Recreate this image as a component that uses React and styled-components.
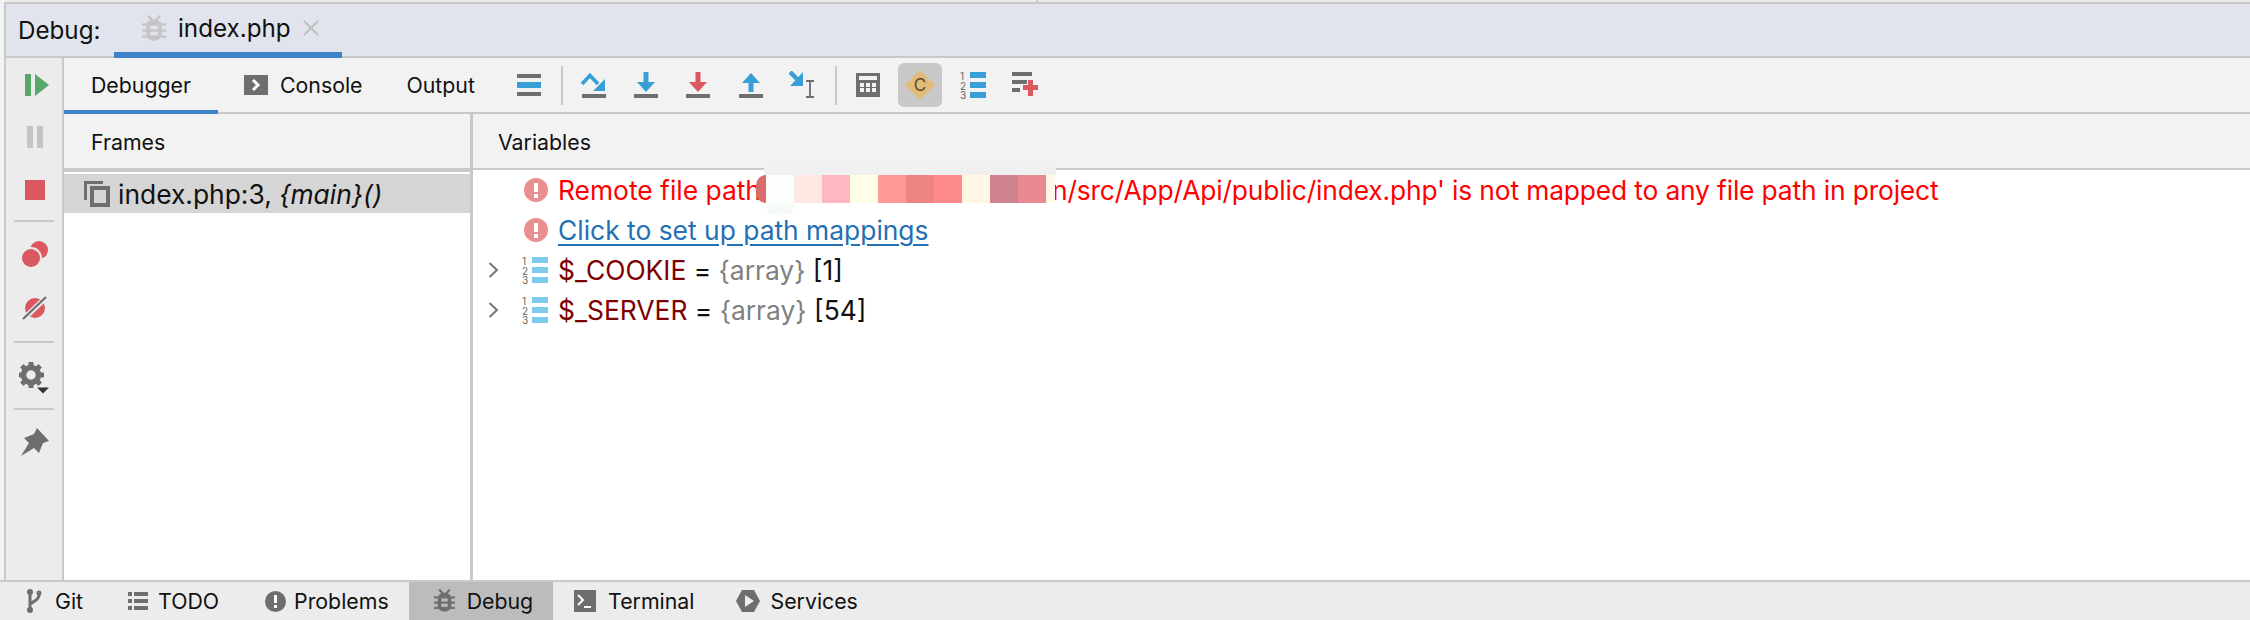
import React from "react";
import styled, { createGlobalStyle } from "styled-components";

const Global = createGlobalStyle`
  html, body { margin: 0; padding: 0; background: #f2f2f2; }
  body { font-family: Inter, "Liberation Sans", sans-serif; color: #111; }
  * { box-sizing: border-box; }
`;

const BLUE = "#389fd6", GRAY = "#6e6e6e", RED = "#db5860", GREEN = "#59a869", LINE = "#c9c9c9";

const Page = styled.div`
  width: 2250px; height: 620px; display: flex; flex-direction: column; overflow: hidden;
  font-size: 21.3px; background: #f2f2f2;
`;
const TopStrip = styled.div`height: 2px; flex: none; background: #ececec; display: flex; margin-left: 6px;`;
const TopStripCell = styled.div`width: 1032px; border-right: 2px solid ${LINE};`;
const Shell = styled.div`
  flex: 1; min-height: 0; margin-left: 4px; border-left: 2px solid ${LINE};
  border-top: 2px solid ${LINE}; display: flex; flex-direction: column;
`;
const DebugHeader = styled.div`
  height: 54px; flex: none; background: #e1e4ec; border-bottom: 2px solid ${LINE};
  display: flex; align-items: stretch; padding-left: 12px; font-size: 24.2px;
`;
const HeaderLabel = styled.div`display: flex; align-items: center; width: 96px;`;
const HeaderTab = styled.div`
  width: 228px; height: 54px; border-bottom: 6px solid #4083c9; display: flex; align-items: center;
  padding-left: 28px; gap: 12px;
`;
const Main = styled.div`flex: 1; min-height: 0; display: flex;`;
const Rail = styled.div`
  width: 58px; flex: none; background: #ececec; border-right: 2px solid ${LINE};
  display: flex; flex-direction: column; align-items: center; padding-top: 14px;
`;
const RailSlot = styled.div`
  width: 44px; height: ${p => p.$h || 44}px; margin-top: ${p => p.$mt || 0}px; margin-left: ${p => p.$ml || 2}px;
  display: flex; align-items: center; justify-content: center; flex: none;
`;
const RailSep = styled.div`width: 40px; height: 2px; flex: none; background: ${LINE}; margin: ${p => p.$m || "0"};`;
const Content = styled.div`flex: 1; min-width: 0; display: flex; flex-direction: column; background: #fff;`;
const Toolbar = styled.div`
  height: 56px; flex: none; background: #f2f2f2; border-bottom: 2px solid ${LINE}; display: flex; align-items: stretch;
`;
const Tab = styled.div`
  display: flex; align-items: center; gap: 12px; height: 56px; padding: 2px ${p => p.$pr}px 0 ${p => p.$pl}px;
  border-bottom: 4px solid ${p => (p.$active ? "#4083c9" : "transparent")};
`;
const IconGroup = styled.div`display: flex; align-items: center; gap: 8.5px; height: 54px;`;
const ToolSep = styled.div`width: 2px; height: 39px; background: ${LINE}; margin-left: 1.5px; flex: none;`;
const ToolButton = styled.div`
  width: 44px; height: 44px; flex: none; display: flex; align-items: center; justify-content: center;
  border-radius: 6px; background: ${p => (p.$on ? "#c8c8c8" : "transparent")};
`;
const Panels = styled.div`flex: 1; min-height: 0; display: flex;`;
const FramesPanel = styled.div`width: 409px; flex: none; border-right: 3px solid ${LINE}; display: flex; flex-direction: column;`;
const FramesHeader = styled.div`
  height: 58px; flex: none; background: #f2f2f2; border-bottom: 4px solid ${LINE}; display: flex; align-items: center; padding: 2px 0 0 27px;
`;
const FrameRow = styled.div`
  height: 39px; margin-top: 2px; background: #d5d5d5; display: flex; align-items: center; padding-left: 20px; gap: 8px; flex: none;
  font-size: 26.4px;
`;
const Italic = styled.em`font-style: italic;`;
const VarsPanel = styled.div`flex: 1; min-width: 0; display: flex; flex-direction: column;`;
const VarsHeader = styled.div`
  height: 56px; flex: none; background: #f2f2f2; border-bottom: 2px solid ${LINE}; display: flex; align-items: center; padding: 2px 0 0 25px;
`;
const VarRow = styled.div`height: 40px; flex: none; display: flex; align-items: center; white-space: pre; font-size: 26.4px;`;
const ChevronBox = styled.div`width: 12px; margin-left: 15px; flex: none; display: flex;`;
const RowIcon = styled.div`
  width: 27px; margin-left: ${p => p.$ml || 21}px; margin-right: 10px; flex: none; display: flex; justify-content: flex-end;
`;
const ErrorText = styled.span`color: #ff0000;`;
const ErrorTail = styled(ErrorText)`letter-spacing: -0.16px;`;
const LinkText = styled.span`color: #2470b3; text-decoration: underline; text-underline-offset: 4px;`;
const VarName = styled.span`color: #7f0000;`;
const VarType = styled.span`color: #808080;`;
const Redaction = styled.span`display: inline-block; position: relative; height: 28px; width: ${p => p.$w}px; flex: none;`;
const RedactionVeil = styled.span`
  position: absolute; left: 3px; top: -11px; width: 292px; height: 12px; background: #f0f0f0;
`;
const RedactionBlob = styled.span`
  position: absolute; left: -5px; top: -1px; width: 12px; height: 28px; background: #d96d6b; border-radius: 10px 0 0 10px;
`;
const RedactionTail = styled.span`
  position: absolute; left: 5px; top: 27px; width: 28px; height: 12px; background: #f7fbf8; border-radius: 0 0 8px 8px;
`;
const Pixels = styled.span`position: absolute; left: 5px; top: -1px; display: flex; height: 28px;`;
const Pixel = styled.span`display: block; width: ${p => p.$w || 28}px; height: 28px; background: ${p => p.$c};`;
const BottomBar = styled.div`
  height: 40px; flex: none; background: #ececec; border-top: 2px solid ${LINE}; display: flex; align-items: stretch;
`;
const BottomItem = styled.div`
  display: flex; align-items: center; gap: ${p => p.$gap}px; padding: 0 20px 0 ${p => p.$pl}px;
  background: ${p => (p.$on ? "#bcbcbc" : "transparent")};
`;

const Bug = ({ c, s = 24, bg }) => (
  <svg width={s} height={s * 1.1} viewBox="0 0 20 22">
    <path d="M5 .5l3.500 4M15 .5l-3.500 4" stroke={c} strokeWidth="2" fill="none" />
    <rect x="3.500" y="3.500" width="13" height="18" rx="6" fill={c} />
    <rect x="0" y="7" width="20" height="2" fill={c} />
    <rect x="0" y="12" width="20" height="2" fill={c} />
    <rect x="0" y="17" width="20" height="2" fill={c} />
    <rect x="7" y="9" width="6" height="3" fill={bg} />
    <rect x="7" y="14" width="6" height="3" fill={bg} />
  </svg>
);
const CloseX = () => (
  <svg width="16" height="16" viewBox="0 0 16 16" stroke="#c0c0c0" strokeWidth="1.800"><path d="M1 1l14 14M15 1L1 15" /></svg>
);
const Resume = () => (
  <svg width="24" height="22" viewBox="0 0 24 22"><rect width="6" height="22" fill={GREEN} /><path d="M10 0l14 11-14 11z" fill={GREEN} /></svg>
);
const Pause = () => (
  <svg width="16" height="22" viewBox="0 0 16 22" fill="#c4c4c4"><rect width="6" height="22" /><rect x="10" width="6" height="22" /></svg>
);
const Stop = () => <svg width="20" height="20"><rect width="20" height="20" fill={RED} /></svg>;
const Breakpoints = () => (
  <svg width="26" height="26" viewBox="0 0 26 26">
    <circle cx="17" cy="9" r="9" fill={RED} />
    <circle cx="9" cy="17" r="11" fill="#ececec" />
    <circle cx="9" cy="17" r="9" fill={RED} />
  </svg>
);
const Mute = () => (
  <svg width="26" height="24" viewBox="0 0 26 24">
    <circle cx="13" cy="12" r="10" fill={RED} />
    <path d="M0 24.500L24.500 1" stroke="#ececec" strokeWidth="5.500" />
    <path d="M1 23L24 1" stroke={GRAY} strokeWidth="2.200" />
  </svg>
);
const Gear = () => (
  <svg width="32" height="32" viewBox="0 0 32 32">
    <g fill={GRAY}>
      {[0, 45, 90, 135, 180, 225, 270, 315].map(a => (
        <rect key={a} x="9.500" y="0" width="5" height="6" transform={`rotate(${a} 12 13)`} />
      ))}
    </g>
    <circle cx="12" cy="13" r="7.500" fill="none" stroke={GRAY} strokeWidth="5.500" />
    <path d="M18 25.500h12l-6 6z" fill="#333" />
  </svg>
);
const Pin = () => (
  <svg width="28" height="28" viewBox="0 0 28 28" fill={GRAY}>
    <path d="M16 0l12 13-6 2-4 10-5-5L0 28l8-13-5-5 10-4z" />
  </svg>
);
const ConsoleIcon = () => (
  <svg width="24" height="20" viewBox="0 0 24 20"><rect width="24" height="20" fill={GRAY} /><path d="M9 5l5 5-5 5" fill="none" stroke="#fff" strokeWidth="3" /></svg>
);
const Threads = () => (
  <svg width="24" height="22" viewBox="0 0 24 22">
    <rect width="24" height="4" fill={GRAY} /><rect y="8" width="24" height="6" fill={BLUE} /><rect y="18" width="24" height="4" fill={GRAY} />
  </svg>
);
const StepOver = () => (
  <svg width="26" height="26" viewBox="0 0 26 26">
    <path d="M2 12L10 3.500 18 12" fill="none" stroke={BLUE} strokeWidth="3.600" />
    <path d="M25 7v12H13z" fill={BLUE} />
    <rect x="2" y="22" width="24" height="4" fill={GRAY} />
  </svg>
);
const StepInto = ({ c = BLUE }) => (
  <svg width="24" height="26" viewBox="0 0 24 26">
    <rect x="9.500" width="5" height="12" fill={c} /><path d="M3 10h18l-9 10z" fill={c} />
    <rect y="22" width="24" height="4" fill={GRAY} />
  </svg>
);
const StepOut = () => (
  <svg width="24" height="26" viewBox="0 0 24 26">
    <path d="M12 1l9 10H3z" fill={BLUE} /><rect x="9.500" y="10" width="5" height="10" fill={BLUE} />
    <rect y="22" width="24" height="4" fill={GRAY} />
  </svg>
);
const RunToCursor = () => (
  <svg width="28" height="28" viewBox="0 0 28 28">
    <path d="M1 1l9 9" stroke={BLUE} strokeWidth="4.500" fill="none" />
    <path d="M14 1v14H1z" fill={BLUE} />
    <path d="M17 10h8M17 26h8M21 10v16" stroke={GRAY} strokeWidth="1.800" fill="none" />
  </svg>
);
const Calc = () => (
  <svg width="24" height="24" viewBox="0 0 24 24">
    <rect width="24" height="24" fill={GRAY} />
    <rect x="3" y="3" width="18" height="4" fill="#f2f2f2" />
    {[10, 15].map(y => [4, 10, 16].map(x => <rect key={x + "-" + y} x={x} y={y} width="4" height="4" fill="#f2f2f2" />))}
  </svg>
);
const CBadge = () => (
  <svg width="30" height="30" viewBox="0 0 30 30">
    <path d="M15 0l15 15-15 15L0 15z" fill="#e3bb78" />
    <text x="15" y="21" textAnchor="middle" fontSize="17" fontFamily="Inter, sans-serif" fill="#5a4a30">C</text>
  </svg>
);
const NumList = ({ c = BLUE, dg = "#666" }) => (
  <svg width="26" height="34" viewBox="0 0 26 34">
    <g fill={dg} fontSize="10" fontFamily="Inter, sans-serif">
      <text x="0" y="12">1</text><text x="0" y="21.500">2</text><text x="0" y="31">3</text>
    </g>
    <rect x="10" y="4" width="16" height="6" fill={c} /><rect x="10" y="14" width="16" height="6" fill={c} /><rect x="10" y="24" width="16" height="6" fill={c} />
  </svg>
);
const AddList = () => (
  <svg width="26" height="26" viewBox="0 0 26 26">
    <rect y="0" width="20" height="4" fill={GRAY} /><rect y="8" width="15" height="4" fill={GRAY} /><rect y="16" width="8" height="4" fill={GRAY} />
    <rect x="11" y="13" width="15" height="5" fill={RED} /><rect x="16" y="8" width="5" height="16" fill={RED} />
  </svg>
);
const FrameIcon = () => (
  <svg width="26" height="26" viewBox="0 0 26 26" fill="none" stroke={GRAY}>
    <path d="M1.500 19V1.500H19" strokeWidth="3" />
    <rect x="8" y="7" width="16" height="17" strokeWidth="4" />
  </svg>
);
const ErrorIcon = () => (
  <svg width="24" height="24" viewBox="0 0 24 24">
    <circle cx="12" cy="12" r="12" fill="#e98f8f" />
    <rect x="10" y="5" width="4" height="9" fill="#fff" /><rect x="10" y="16" width="4" height="4" fill="#fff" />
  </svg>
);
const Chevron = () => (
  <svg width="11" height="16" viewBox="0 0 11 16" fill="none" stroke="#777" strokeWidth="2"><path d="M1.500 1l7.500 7-7.500 7" /></svg>
);
const GitIcon = () => (
  <svg width="18" height="24" viewBox="0 0 18 24" fill="none" stroke={GRAY} strokeWidth="3">
    <path d="M5 3v18M14 4v2c0 5-5 6-9 9" /><circle cx="5" cy="3" r="1.500" /><circle cx="14" cy="4" r="1" /><circle cx="5" cy="21" r="1.500" />
  </svg>
);
const TodoIcon = () => (
  <svg width="20" height="18" viewBox="0 0 20 18" fill={GRAY}>
    {[0, 7, 14].map(y => <g key={y}><rect y={y} width="4" height="4" /><rect x="6" y={y} width="14" height="4" /></g>)}
  </svg>
);
const ProblemIcon = () => (
  <svg width="21" height="21" viewBox="0 0 21 21">
    <circle cx="10.500" cy="10.500" r="10.500" fill={GRAY} /><rect x="9" y="4" width="3" height="8" fill="#fff" /><rect x="9" y="14" width="3" height="3" fill="#fff" />
  </svg>
);
const TerminalIcon = () => (
  <svg width="22" height="22" viewBox="0 0 22 22">
    <rect width="22" height="22" fill={GRAY} /><path d="M4 5l5 5-5 5" fill="none" stroke="#fff" strokeWidth="2" /><rect x="10" y="16" width="7" height="2" fill="#fff" />
  </svg>
);
const ServicesIcon = () => (
  <svg width="24" height="24" viewBox="0 0 24 24">
    <path d="M6 1h12l6 11-6 11H6L0 12z" fill={GRAY} /><path d="M9 6l9 6-9 6z" fill="#ececec" />
  </svg>
);

const pixels = ["#fbfefa", "#fde8e3", "#ffb8c0", "#ffffe8", "#ff9a94", "#ef8583", "#ff8a8e", "#fff6e6", "#cf8391", "#e88a90"];

const VarLine = ({ name, size }) => (
  <VarRow>
    <ChevronBox><Chevron /></ChevronBox>
    <RowIcon><NumList c="#7dcced" /></RowIcon>
    <VarName>{name}</VarName>
    <span> = </span>
    <VarType>{"{array}"}</VarType>
    <span> [{size}]</span>
  </VarRow>
);

export default function App() {
  return (
    <Page>
      <Global />
      <TopStrip><TopStripCell /></TopStrip>
      <Shell>
        <DebugHeader>
          <HeaderLabel>Debug:</HeaderLabel>
          <HeaderTab><Bug c="#c6c6c6" bg="#e1e4ec" /><span>index.php</span><CloseX /></HeaderTab>
        </DebugHeader>
        <Main>
          <Rail>
            <RailSlot $h="26" $ml="5"><Resume /></RailSlot>
            <RailSlot $h="26" $mt="26"><Pause /></RailSlot>
            <RailSlot $h="24" $mt="28"><Stop /></RailSlot>
            <RailSep $m="18px 0 18px" />
            <RailSlot $h="28"><Breakpoints /></RailSlot>
            <RailSlot $h="28" $mt="26"><Mute /></RailSlot>
            <RailSep $m="19px 0 18px" />
            <RailSlot $h="34"><Gear /></RailSlot>
            <RailSep $m="13px 0 17px" />
            <RailSlot $h="30"><Pin /></RailSlot>
          </Rail>
          <Content>
            <Toolbar>
              <Tab $active $pl={27} $pr={27}>Debugger</Tab>
              <Tab $pl={26} $pr={22}><ConsoleIcon />Console</Tab>
              <Tab $pl={22} $pr={32}>Output</Tab>
              <IconGroup>
                <ToolButton><Threads /></ToolButton>
                <ToolSep />
                <ToolButton><StepOver /></ToolButton>
                <ToolButton><StepInto /></ToolButton>
                <ToolButton><StepInto c={RED} /></ToolButton>
                <ToolButton><StepOut /></ToolButton>
                <ToolButton><RunToCursor /></ToolButton>
                <ToolSep />
                <ToolButton><Calc /></ToolButton>
                <ToolButton $on><CBadge /></ToolButton>
                <ToolButton><NumList /></ToolButton>
                <ToolButton><AddList /></ToolButton>
              </IconGroup>
            </Toolbar>
            <Panels>
              <FramesPanel>
                <FramesHeader>Frames</FramesHeader>
                <FrameRow><FrameIcon /><span>index.php:3, <Italic>{"{main}()"}</Italic></span></FrameRow>
              </FramesPanel>
              <VarsPanel>
                <VarsHeader>Variables</VarsHeader>
                <VarRow>
                  <RowIcon $ml={48}><ErrorIcon /></RowIcon>
                  <ErrorText>Remote file path</ErrorText>
                  <Redaction $w={291}>
                    <RedactionVeil />
                    <RedactionBlob />
                    <RedactionTail />
                    <Pixels>
                      {pixels.map(c => <Pixel key={c} $c={c} />)}
                      <Pixel $c="#fff8e8" $w={9} />
                    </Pixels>
                  </Redaction>
                  <ErrorTail>n/src/App/Api/public/index.php' is not mapped to any file path in project</ErrorTail>
                </VarRow>
                <VarRow>
                  <RowIcon $ml={48}><ErrorIcon /></RowIcon>
                  <LinkText>Click to set up path mappings</LinkText>
                </VarRow>
                <VarLine name="$_COOKIE" size="1" />
                <VarLine name="$_SERVER" size="54" />
              </VarsPanel>
            </Panels>
          </Content>
        </Main>
      </Shell>
      <BottomBar>
        <BottomItem $pl={25} $gap={12}><GitIcon />Git</BottomItem>
        <BottomItem $pl={25} $gap={10}><TodoIcon />TODO</BottomItem>
        <BottomItem $pl={26} $gap={8}><ProblemIcon />Problems</BottomItem>
        <BottomItem $on $pl={25} $gap={12}><Bug c={GRAY} s={21} bg="#bcbcbc" />Debug</BottomItem>
        <BottomItem $pl={21} $gap={12}><TerminalIcon />Terminal</BottomItem>
        <BottomItem $pl={22} $gap={10}><ServicesIcon />Services</BottomItem>
      </BottomBar>
    </Page>
  );
}
